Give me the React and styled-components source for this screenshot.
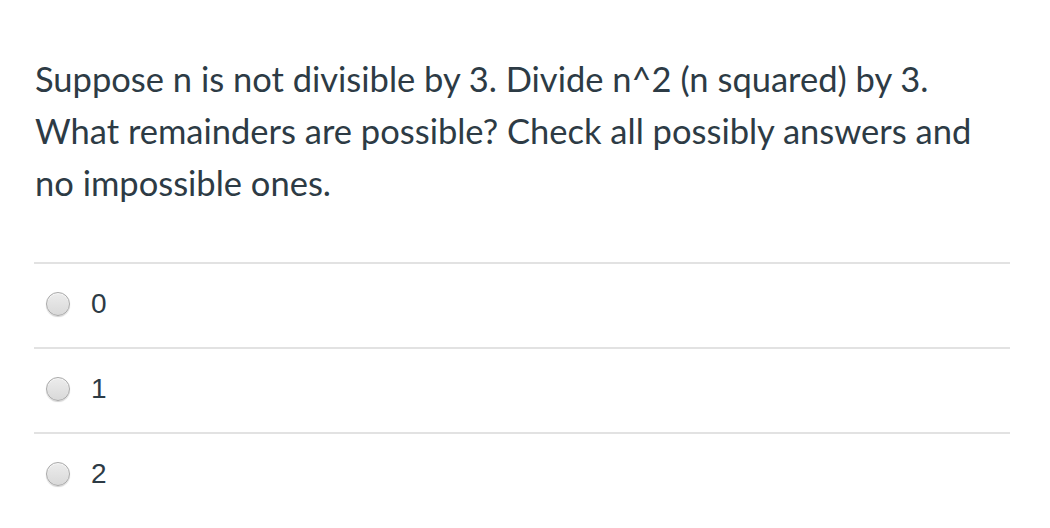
import React from 'react';
import styled, { createGlobalStyle } from 'styled-components';

const Global = createGlobalStyle`
  html, body {
    margin: 0;
    padding: 0;
    background: #fff;
  }
`;

const Page = styled.div`
  padding: 53px 40px 0 34px;
  width: 1050px;
  box-sizing: border-box;
`;

const Question = styled.p`
  margin: 0 0 53px 1px;
  font-family: Lato, "Liberation Sans", sans-serif;
  font-size: 34.5px;
  line-height: 52px;
  color: #2d3b45;
`;

const Answers = styled.div`
  display: flex;
  flex-direction: column;
`;

const Row = styled.label`
  display: flex;
  align-items: center;
  height: 85px;
  padding-bottom: 4px;
  box-sizing: border-box;
  border-top: 2px solid #e2e2e2;
`;

const Radio = styled.span`
  width: 22px;
  height: 22px;
  margin-left: 12px;
  margin-right: 21px;
  border-radius: 50%;
  border: 1px solid #a9a9a9;
  background: linear-gradient(#ececec, #d9d9d9);
  box-shadow: 0 1px 1px rgba(0, 0, 0, 0.18), inset 0 1px 1px rgba(255, 255, 255, 0.7);
  flex: none;
`;

const Value = styled.span`
  font-family: "Liberation Sans", Arial, sans-serif;
  font-size: 28px;
  color: #2d3b45;
`;

const options = ['0', '1', '2'];

export default function App() {
  return (
    <Page>
      <Global />
      <Question>
        Suppose n is not divisible by 3. Divide n^2 (n squared) by 3.
        <br />
        What remainders are possible? Check all possibly answers and
        <br />
        no impossible ones.
      </Question>
      <Answers>
        {options.map(o => (
          <Row key={o}>
            <Radio />
            <Value>{o}</Value>
          </Row>
        ))}
      </Answers>
    </Page>
  );
}
